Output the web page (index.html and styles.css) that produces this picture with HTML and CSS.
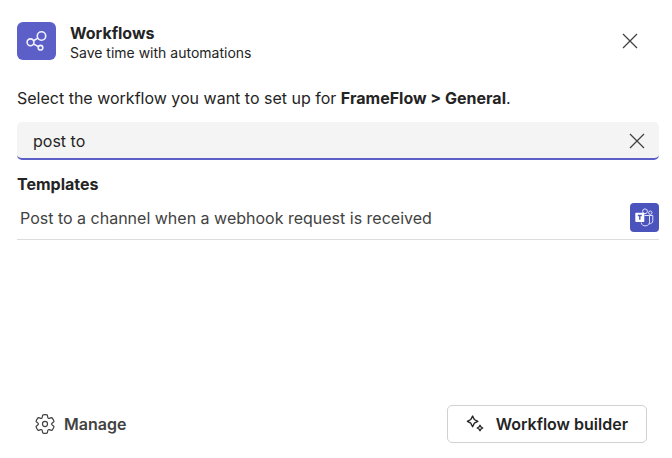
FILE: index.html
```html
<!DOCTYPE html>
<html lang="en">
<head>
<meta charset="utf-8">
<title>Workflows</title>
<link rel="stylesheet" href="styles.css">
</head>
<body>
<main class="dialog">
  <header class="header">
    <svg class="app-icon" viewBox="0 0 39 38" aria-hidden="true">
      <rect width="39" height="38" rx="6"/>
      <g class="nodes">
        <circle cx="24.5" cy="14" r="4.2"/>
        <circle cx="13.5" cy="20.3" r="3.4"/>
        <circle cx="23.5" cy="25.7" r="2.3"/>
        <path d="M16.5 18.7l4.4-2.6M16.5 22l4.9 2.6"/>
      </g>
    </svg>
    <div class="heading">
      <h1>Workflows</h1>
      <p>Save time with automations</p>
    </div>
    <button class="icon-button" type="button" aria-label="Close">
      <svg class="cross" viewBox="0 0 16 16" aria-hidden="true"><path d="M1 1l14 14M15 1L1 15"/></svg>
    </button>
  </header>

  <label class="prompt" for="search">Select the workflow you want to set up for <strong>FrameFlow &gt; General</strong>.</label>
  <div class="search">
    <input id="search" type="text" value="post to">
    <button class="icon-button" type="button" aria-label="Clear">
      <svg class="cross" viewBox="0 0 16 16" aria-hidden="true"><path d="M1 1l14 14M15 1L1 15"/></svg>
    </button>
  </div>

  <section>
    <h2>Templates</h2>
    <ul class="templates">
      <li>
        <a class="template" href="#">
          <span>Post to a channel when a webhook request is received</span>
          <svg class="teams" viewBox="0 0 29 29" aria-hidden="true">
            <rect class="tile" width="29" height="29" rx="4"/>
            <g class="people">
              <circle cx="15" cy="8.3" r="2.4"/>
              <circle cx="20.3" cy="9.7" r="1.7"/>
              <path d="M14.5 12.5h5v5.8a4.2 4.2 0 0 1-8.3 1.2"/>
              <path d="M19.5 12.5h3.3v5.2a3.1 3.1 0 0 1-3.8 3"/>
            </g>
            <rect class="badge" x="5.3" y="9.8" width="9" height="9.2" rx="0.8"/>
            <path class="letter-mark" d="M7.8 12.5h4M9.8 12.5v4.3"/>
          </svg>
        </a>
      </li>
    </ul>
  </section>

  <footer class="footer">
    <button class="manage" type="button">
      <svg class="gear" viewBox="0 0 20 20" aria-hidden="true">
        <path d="M1.91 7.38A8.5 8.5 0 0 1 3.7 4.3a.5.5 0 0 1 .54-.13l1.92.68a1 1 0 0 0 1.32-.76l.36-2a.5.5 0 0 1 .4-.4 8.53 8.53 0 0 1 3.55 0c.2.04.35.2.38.4l.37 2a1 1 0 0 0 1.32.76l1.92-.68a.5.5 0 0 1 .54.13 8.5 8.5 0 0 1 1.78 3.08c.06.2 0 .4-.15.54l-1.56 1.32a1 1 0 0 0 0 1.52l1.56 1.32a.5.5 0 0 1 .15.54 8.5 8.5 0 0 1-1.78 3.08.5.5 0 0 1-.54.13l-1.92-.68a1 1 0 0 0-1.32.76l-.37 2a.5.5 0 0 1-.38.4 8.53 8.53 0 0 1-3.56 0 .5.5 0 0 1-.39-.4l-.36-2a1 1 0 0 0-1.32-.76l-1.92.68a.5.5 0 0 1-.54-.13 8.5 8.5 0 0 1-1.78-3.08.5.5 0 0 1 .15-.54l1.56-1.32a1 1 0 0 0 0-1.52L2.06 7.92a.5.5 0 0 1-.15-.54Z"/>
        <circle cx="10" cy="10" r="2.3"/>
      </svg>
      Manage
    </button>
    <button class="builder" type="button">
      <svg class="sparkle" viewBox="0 0 22 22" aria-hidden="true">
        <path d="M7.6 3.1l1.7 3.4 3.5 1.9-3.5 1.8-1.7 3.5-1.8-3.5-3.4-1.8 3.4-1.9z"/>
        <path d="M15 12.3l1 1.7 1.7 1-1.7 1-1 1.7-1-1.7-1.7-1 1.7-1z"/>
      </svg>
      Workflow builder
    </button>
  </footer>
</main>
</body>
</html>
```
FILE: styles.css
```css
* {
  box-sizing: border-box;
}

body {
  margin: 0;
  background: #fff;
  color: #242424;
  font: 16px/20px Inter, "Liberation Sans", sans-serif;
}

h1, h2, p, ul {
  margin: 0;
  padding: 0;
}

h1, h2 {
  font-size: 16px;
  font-weight: 700;
}

strong {
  font-weight: 700;
}

button, input {
  border: 0;
  padding: 0;
  background: none;
  color: inherit;
  font: inherit;
}

svg {
  display: block;
  flex: none;
  fill: none;
}

.dialog {
  display: flex;
  flex-direction: column;
  min-height: 100vh;
  padding: 22px 13px 15px 17px;
}

.header {
  display: flex;
  align-items: flex-start;
  gap: 14px;
  padding-right: 13px;
}

.app-icon {
  width: 39px;
  height: 38px;
  fill: #5b5fc7;
}

.nodes {
  fill: none;
  stroke: #f3f2ff;
  stroke-width: 1.6;
}

.heading {
  flex: 1;
  padding-top: 1px;
}

.heading p {
  font-size: 14px;
}

.icon-button {
  display: grid;
  place-items: center;
  width: 32px;
  height: 38px;
}

.cross {
  width: 16px;
  height: 16px;
  stroke: #424242;
  stroke-width: 1.3;
}

.prompt {
  margin-top: 25px;
}

.search {
  display: flex;
  align-items: center;
  height: 38px;
  margin-top: 14px;
  padding: 2px 6px 0 16px;
  border-bottom: 2px solid #5b5fc7;
  border-radius: 5px;
  background: #f4f4f4;
}

.search input {
  flex: 1;
  min-width: 0;
  outline: 0;
}

h2 {
  margin-top: 14px;
}

.templates {
  list-style: none;
}

.template {
  display: flex;
  align-items: center;
  justify-content: space-between;
  padding: 9px 0 7px 3px;
  border-bottom: 1px solid #dcdcdc;
  color: #424242;
  text-decoration: none;
}

.teams {
  width: 29px;
  height: 29px;
}

.tile {
  fill: #4b53bc;
}

.people {
  stroke: #dfe1ff;
  stroke-width: 1;
}

.badge {
  fill: #fff;
}

.letter-mark {
  stroke: #4b53bc;
  stroke-width: 1.4;
}

.footer {
  display: flex;
  align-items: center;
  justify-content: space-between;
  margin-top: auto;
  padding: 0 12px 0 17px;
}

.manage, .builder {
  display: flex;
  align-items: center;
  font-weight: 600;
}

.manage {
  gap: 8px;
  color: #424242;
}

.builder {
  gap: 9px;
  height: 38px;
  padding: 0 18px 0 17px;
  border: 1px solid #d1d1d1;
  border-radius: 5px;
}

.gear, .sparkle {
  width: 22px;
  height: 22px;
  stroke: currentColor;
  stroke-width: 1.1;
  stroke-linejoin: round;
}

.sparkle {
  stroke-width: 1.4;
}
```
